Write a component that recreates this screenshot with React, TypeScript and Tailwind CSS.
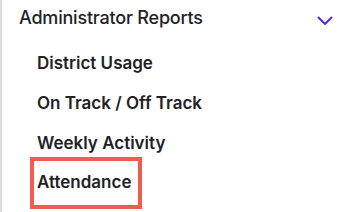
import React from "react";

export default function App() {
  return (
    <div className="w-[354px] h-[212px] bg-white border-l-2 border-[#dcdcdc] overflow-hidden" style={{ fontFamily: "Inter, 'Liberation Sans', sans-serif" }}>
      <div className="flex items-center justify-between pl-[17px] pr-[21px] h-[34px]">
        <span className="text-[18px] font-medium text-[#222226] tracking-[-0.2px]">Administrator Reports</span>
        <svg width="16" height="10" viewBox="0 0 16 10" fill="none" className="mt-[8px]">
          <path d="M1.5 1.5 L8 8 L14.5 1.5" stroke="#5b22f0" strokeWidth="2" strokeLinecap="round" strokeLinejoin="round" />
        </svg>
      </div>
      <div className="flex flex-col pl-[35px] text-[17px] font-semibold text-[#222226]">
        <div className="h-[40px] flex items-center mt-[10px]">District Usage</div>
        <div className="h-[40px] flex items-center">On Track / Off Track</div>
        <div className="h-[40px] flex items-center">Weekly Activity</div>
        <div className="-ml-[7px] -mt-[7px] w-[112px] h-[52px] border-4 border-[#f25c4f] flex items-center pl-[3px]">Attendance</div>
      </div>
    </div>
  );
}
